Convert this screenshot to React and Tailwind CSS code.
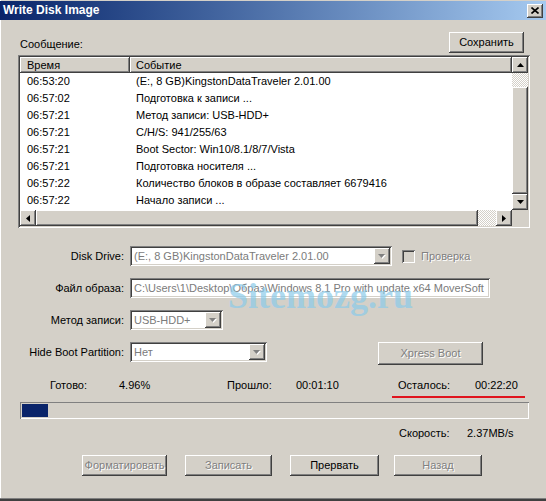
import React from 'react';

const raised =
  'bg-[#d4d0c8] shadow-[inset_-1px_-1px_#404040,inset_1px_1px_#ffffff,inset_-2px_-2px_#808080,inset_2px_2px_#d4d0c8]';
const sunken =
  'shadow-[inset_1px_1px_#808080,inset_-1px_-1px_#ffffff,inset_2px_2px_#404040,inset_-2px_-2px_#d4d0c8]';
const disabledText = 'text-[#808080] [text-shadow:1px_1px_0_#ffffff]';
const checker =
  'bg-[repeating-conic-gradient(#ffffff_0_25%,#d4d0c8_0_50%)] bg-[length:2px_2px]';

const rows = [
  ['06:53:20', '(E:, 8 GB)KingstonDataTraveler 2.01.00'],
  ['06:57:02', 'Подготовка к записи ...'],
  ['06:57:21', 'Метод записи: USB-HDD+'],
  ['06:57:21', 'C/H/S: 941/255/63'],
  ['06:57:21', 'Boot Sector: Win10/8.1/8/7/Vista'],
  ['06:57:21', 'Подготовка носителя ...'],
  ['06:57:22', 'Количество блоков в образе составляет 6679416'],
  ['06:57:22', 'Начало записи ...'],
];

const Tri = ({ dir = 'down', color = '#000000' }) => {
  const vertical = dir === 'up' || dir === 'down';
  const w = vertical ? 7 : 4;
  const h = vertical ? 4 : 7;
  const points = {
    up: '0,4 7,4 3.5,0',
    down: '0,0 7,0 3.5,4',
    left: '4,0 4,7 0,3.5',
    right: '0,0 0,7 4,3.5',
  }[dir];
  return (
    <svg width={w} height={h} viewBox={`0 0 ${w} ${h}`}>
      <polygon points={points} fill={color} />
    </svg>
  );
};

const ScrollBtn = ({ dir }) => (
  <div className={`${raised} w-[16px] h-[16px] flex items-center justify-center shrink-0`}>
    <Tri dir={dir} />
  </div>
);

const DropBtn = () => (
  <div className={`${raised} w-[16px] h-[16px] flex items-center justify-center shrink-0`}>
    <svg width="8" height="5" viewBox="0 0 8 5">
      <polygon points="1,1 8,1 4.5,5" fill="#ffffff" />
      <polygon points="0,0 7,0 3.5,4" fill="#808080" />
    </svg>
  </div>
);

const Combo = ({ className, text }) => (
  <div className={`${sunken} bg-white h-[20px] flex items-center p-[2px] ${className}`}>
    <span className="flex-1 pl-[2px] truncate text-[#7b7b7b]">{text}</span>
    <DropBtn />
  </div>
);

const Button = ({ className, children, disabled }) => (
  <div className={`${raised} flex items-center justify-center ${disabled ? disabledText : ''} ${className}`}>
    {children}
  </div>
);

const FieldRow = ({ label, children, className = '' }) => (
  <div className={`flex ${className}`}>
    <div className="w-[106px] h-[20px] flex items-center justify-end">{label}</div>
    <div className="ml-[6px] flex items-start">{children}</div>
  </div>
);

export default function App() {
  return (
    <div className="w-[546px] h-[501px] bg-[#d4d0c8] flex flex-col relative overflow-hidden font-['Liberation_Sans',Arial,sans-serif] text-[11px] leading-[13px] text-black shadow-[inset_1px_0_#ffffff]">
      {/* title bar */}
      <div className="mt-[1px] h-[19px] bg-gradient-to-r from-[#0a246a] to-[#a6caf0] flex items-center pl-[3px] pr-[3px]">
        <span className="text-white font-bold text-[12px] flex-1">Write Disk Image</span>
        <div className={`${raised} w-[16px] h-[14px] flex items-center justify-center`}>
          <svg width="8" height="7" viewBox="0 0 8 7">
            <path d="M0.5 0.5 L7.5 6.5 M7.5 0.5 L0.5 6.5" stroke="#000" strokeWidth="1.6" />
          </svg>
        </div>
      </div>

      <div className="flex flex-col pl-[18px] pr-[16px]">
        <div className="mt-[12px] h-[21px] flex items-center justify-between pr-[6px]">
          <span className="pl-[2px] pt-[4px]">Сообщение:</span>
          <Button className="w-[75px] h-[21px]">Сохранить</Button>
        </div>

        {/* log list */}
        <div className={`${sunken} mt-[2px] h-[173px] p-[2px] bg-white flex flex-col`}>
          <div className="flex h-[153px]">
            <div className="flex-1 flex flex-col">
              <div className="flex h-[16px] bg-[#d4d0c8]">
                <div className="w-[110px] h-full pl-[7px] flex items-center shadow-[inset_-1px_-1px_#404040,inset_1px_1px_#ffffff,inset_-2px_-2px_#808080]">
                  Время
                </div>
                <div className="flex-1 h-full pl-[6px] flex items-center shadow-[inset_-1px_-1px_#404040,inset_1px_1px_#ffffff,inset_-2px_-2px_#808080]">
                  Событие
                </div>
              </div>
              {rows.map(([time, text], i) => (
                <div key={i} className="flex h-[17px] items-center">
                  <span className="w-[110px] pl-[7px]">{time}</span>
                  <span className="pl-[6px] whitespace-nowrap">{text}</span>
                </div>
              ))}
            </div>
            <div className="w-[16px] flex flex-col">
              <ScrollBtn dir="up" />
              <div className={`h-[14px] ${checker}`} />
              <div className={`${raised} flex-1`} />
              <ScrollBtn dir="down" />
            </div>
          </div>
          <div className="flex h-[16px]">
            <ScrollBtn dir="left" />
            <div className={`${raised} w-[442px]`} />
            <div className={`flex-1 ${checker}`} />
            <ScrollBtn dir="right" />
            <div className="w-[16px] bg-[#d4d0c8]" />
          </div>
        </div>

        {/* settings */}
        <div className="mt-[18px] flex flex-col gap-[12px]">
          <FieldRow label="Disk Drive:">
            <Combo className="w-[262px]" text="(E:, 8 GB)KingstonDataTraveler 2.01.00" />
            <div className="ml-[10px] h-[20px] flex items-center">
              <div className={`w-[13px] h-[13px] bg-[#d4d0c8] ${sunken}`} />
              <span className={`ml-[6px] ${disabledText}`}>Проверка</span>
            </div>
          </FieldRow>
          <FieldRow label="Файл образа:">
            <div className={`${sunken} bg-white w-[360px] h-[20px] flex items-center pl-[4px] text-[#7b7b7b] whitespace-nowrap overflow-hidden`}>
              C:\Users\1\Desktop\Образ\Windows 8.1 Pro with update x64 MoverSoft
            </div>
          </FieldRow>
          <FieldRow label="Метод записи:">
            <Combo className="w-[93px]" text="USB-HDD+" />
          </FieldRow>
          <FieldRow label="Hide Boot Partition:">
            <Combo className="w-[137px]" text="Нет" />
            <Button disabled className="ml-[111px] w-[105px] h-[23px]">
              Xpress Boot
            </Button>
          </FieldRow>
        </div>

        {/* progress info */}
        <div className="mt-[14px] flex h-[13px] pl-[32px] whitespace-nowrap">
          <span className="w-[69px]">Готово:</span>
          <span className="w-[108px]">4.96%</span>
          <span className="w-[69px]">Прошло:</span>
          <span className="w-[102px]">00:01:10</span>
          <span className="w-[77px]">Осталось:</span>
          <span>00:22:20</span>
        </div>

        <div className="mt-[10px] ml-[2px] w-[509px] h-[17px] p-[2px] shadow-[inset_1px_1px_#808080,inset_-1px_-1px_#ffffff]">
          <div className="w-[26px] h-full bg-[#0a246a]" />
        </div>

        <div className="mt-[8px] flex h-[13px] pl-[381px] whitespace-nowrap">
          <span className="w-[68px]">Скорость:</span>
          <span>2.37MB/s</span>
        </div>

        <div className="mt-[15px] flex h-[21px] pl-[64px]">
          <Button disabled className="w-[85px] h-[21px]">
            Форматировать
          </Button>
          <Button disabled className="ml-[18px] w-[87px] h-[21px]">
            Записать
          </Button>
          <Button className="ml-[18px] w-[89px] h-[21px]">Прервать</Button>
          <Button disabled className="ml-[15px] w-[88px] h-[21px]">
            Назад
          </Button>
        </div>
      </div>

      <div className="mt-auto h-[3px] border-t border-[#808080] bg-[#404040]" />

      {/* watermark */}
      <div className="absolute left-[228px] top-[278px] pointer-events-none font-['Liberation_Serif',serif] font-bold text-[36px] leading-[36px] text-[#8ccbea] opacity-70">
        Sitemozg.ru
      </div>
      {/* red underline annotation */}
      <div className="absolute left-[392px] top-[396px] w-[133px] h-[2px] bg-[#e0141e]" />
    </div>
  );
}
